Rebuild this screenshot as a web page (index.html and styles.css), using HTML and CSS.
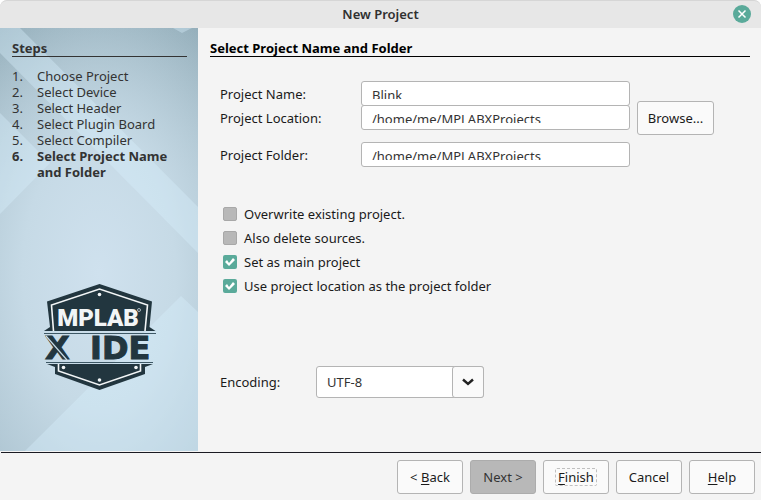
FILE: index.html
```html
<!DOCTYPE html>
<html lang="en">
<head>
<meta charset="utf-8">
<title>New Project</title>
<link rel="stylesheet" href="styles.css">
</head>
<body>
<div class="window">
  <header class="titlebar">
    <h1 class="title">New Project</h1>
    <button class="close" type="button" aria-label="Close">
      <svg viewBox="0 0 18 18" aria-hidden="true"><path d="M5.500 5.500l7 7M12.500 5.500l-7 7"/></svg>
    </button>
  </header>
  <div class="content">
    <aside class="steps">
      <svg class="facets" viewBox="0 0 198 423" preserveAspectRatio="none" aria-hidden="true">
        <path class="light" d="M0 0H20L198 179V225L0 25Z"/>
        <path class="light" d="M0 85L50 135L0 186Z"/>
        <path class="light" d="M173 0H192L182 5Z"/>
        <path class="light" d="M25 423L181 268L198 284V423Z"/>
      </svg>
      <h2 class="heading">Steps</h2>
      <ol class="list">
        <li><span>1.</span><span>Choose Project</span></li>
        <li><span>2.</span><span>Select Device</span></li>
        <li><span>3.</span><span>Select Header</span></li>
        <li><span>4.</span><span>Select Plugin Board</span></li>
        <li><span>5.</span><span>Select Compiler</span></li>
        <li class="current"><span>6.</span><span>Select Project Name and Folder</span></li>
      </ol>
      <svg class="logo" viewBox="0 0 116 108" role="img" aria-label="MPLAB X IDE">
        <path class="ink" d="M57.500 1L110 18.500L107.500 44L113.500 48H2L8 44L5 18.500Z"/>
        <path class="rim" d="M11.500 48L9.500 22L57.500 6L105.500 22L103 48"/>
        <path class="thin" d="M2 50.500H114M4 79.500H111"/>
        <path class="ink" d="M5 81H111L103 84V91L57.500 107L13 91V84Z"/>
        <path class="rim" d="M16.500 81V88L57.500 102L98.500 88V81"/>
        <circle class="dot" cx="57.500" cy="11.500" r="1.800"/>
        <circle class="dot" cx="21.500" cy="84.500" r="1.800"/>
        <circle class="dot" cx="94" cy="84.500" r="1.800"/>
        <circle class="dot" cx="57.500" cy="97" r="1.800"/>
        <text class="brand" x="56" y="43" text-anchor="middle">MPLAB</text>
        <circle class="reg" cx="97" cy="27" r="1.500"/>
        <text class="product" x="3" y="76">X</text>
        <text class="product" x="48" y="76">IDE</text>
        <path class="slash" d="M4 53L25 77"/>
      </svg>
    </aside>
    <main class="panel">
      <h2 class="heading">Select Project Name and Folder</h2>
      <form class="form" id="project">
        <div class="paths">
          <label for="name">Project Name:</label>
          <div class="field"><input id="name" type="text" value="Blink"></div>
          <label for="location">Project Location:</label>
          <div class="field joined"><input id="location" type="text" value="/home/me/MPLABXProjects"></div>
          <button class="button browse" type="button">Browse...</button>
          <label class="apart" for="folder">Project Folder:</label>
          <div class="field apart"><input id="folder" type="text" value="/home/me/MPLABXProjects" readonly></div>
        </div>
        <div class="options">
          <label><input type="checkbox" disabled>Overwrite existing project.</label>
          <label><input type="checkbox" disabled>Also delete sources.</label>
          <label><input type="checkbox" checked>Set as main project</label>
          <label><input type="checkbox" checked>Use project location as the project folder</label>
        </div>
        <div class="encoding">
          <label for="encoding">Encoding:</label>
          <div class="combo">
            <select id="encoding"><option>UTF-8</option></select>
            <span class="arrow"><svg viewBox="0 0 12 8" aria-hidden="true"><path d="M1 1.500L6 6L11 1.500"/></svg></span>
          </div>
        </div>
      </form>
    </main>
  </div>
  <footer class="footer">
    <button class="button" type="button"><span>&lt; <u>B</u>ack</span></button>
    <button class="button" type="button" disabled><span>Next &gt;</span></button>
    <button class="button" type="submit" form="project"><span class="focus"><u>F</u>inish</span></button>
    <button class="button" type="button"><span>Cancel</span></button>
    <button class="button" type="button"><span><u>H</u>elp</span></button>
  </footer>
</div>
</body>
</html>
```
FILE: styles.css
```css
* {
  box-sizing: border-box;
}

body {
  margin: 0;
  background: #fff;
}

body,
button,
input,
select {
  font-family: "Noto Sans", sans-serif;
  font-size: 13px;
  line-height: 16px;
  color: #1a1a1a;
}

.window {
  display: flex;
  flex-direction: column;
  min-height: 100vh;
  background: #f4f4f4;
  border-radius: 7px 7px 0 0;
}

.titlebar {
  display: grid;
  grid-template-columns: 1fr auto 1fr;
  align-items: center;
  height: 28px;
  padding: 0 10px 2px;
  background: #e7e7e7;
  border-top: 1px solid #d6d6d6;
  border-radius: 7px 7px 0 0;
}

.title {
  grid-column: 2;
  margin: 0;
  font-size: 13px;
  font-weight: 600;
  color: #303030;
}

.close {
  justify-self: end;
  width: 18px;
  height: 18px;
  padding: 0;
  border: 0;
  border-radius: 50%;
  background: #5aaa9a;
}

.close svg {
  display: block;
  fill: none;
  stroke: #fff;
  stroke-width: 1.5;
}

.content {
  display: grid;
  grid-template-columns: 198px 1fr;
  flex: 1;
}

.steps {
  position: relative;
  display: flex;
  flex-direction: column;
  padding: 12px 11px 60px 12px;
  background:
    radial-gradient(ellipse 170px 300px at 50% 58%, #cfe1ee 0%, #c6dae6 45%, rgba(190, 212, 223, 0) 100%),
    linear-gradient(#95afbb, #a8bfcb 35%, #a8c0cd);
  color: #333;
}

.facets {
  position: absolute;
  inset: 0;
  width: 100%;
  height: 100%;
}

.light {
  fill: #d8effc;
  fill-opacity: 0.38;
}

.steps > :not(.facets) {
  position: relative;
}

.heading {
  margin: 0;
  border-bottom: 1px solid currentColor;
  font-size: 13px;
  line-height: 16px;
  font-weight: 700;
}

.list {
  margin: 11px 0 0;
  padding: 0;
  list-style: none;
}

.list li {
  display: grid;
  grid-template-columns: 25px 1fr;
}

.current {
  font-weight: 700;
}

.logo {
  width: 116px;
  height: 108px;
  margin: auto 0 0 30px;
}

.ink,
.product {
  fill: #22363f;
}

.rim {
  fill: none;
  stroke: #f2f5f6;
  stroke-width: 1.6;
}

.thin {
  stroke: #3d5865;
  stroke-width: 1.2;
}

.dot,
.brand {
  fill: #f2f5f6;
}

.brand {
  font: 900 24px Roboto, sans-serif;
}

.product {
  font: 700 32px "DejaVu Sans", sans-serif;
  stroke: #22363f;
  stroke-width: 1;
}

.reg {
  fill: none;
  stroke: #a9b7bd;
}

.slash {
  stroke: #c8dce7;
  stroke-width: 1.2;
}

.panel {
  padding: 12px 11px 20px 12px;
}

.panel .heading {
  color: #000;
}

.form {
  padding: 24px 36px 0 10px;
}

.paths {
  display: grid;
  grid-template-columns: 141px 1fr 84px;
  align-items: center;
}

.field {
  grid-column: 2;
  height: 25px;
  padding: 8px 10px;
  border: 1px solid #b4b4b4;
  border-radius: 3px;
  background: #fff;
}

.joined {
  margin-top: -1px;
}

.apart {
  margin-top: 12px;
}

.field input {
  display: block;
  width: 100%;
  height: 9px;
  padding: 0;
  border: 0;
  outline: 0;
  background: none;
  font-size: 13px;
  line-height: 9px;
  color: #333;
}

.button {
  height: 34px;
  padding: 0;
  border: 1px solid #b4b4b4;
  border-radius: 3px;
  background: #fafafa;
}

.button:disabled {
  background: #b8b8b8;
  border-color: #acacac;
  color: #333;
}

.browse {
  grid-area: 1 / 3 / 3 / 4;
  align-self: end;
  margin: 0 0 -5px 7px;
}

.options {
  display: grid;
  gap: 8px;
  margin-top: 39px;
}

.options label {
  display: flex;
  align-items: center;
  gap: 7px;
  padding-left: 3px;
}

.options input {
  appearance: none;
  width: 14px;
  height: 14px;
  margin: 0;
  border-radius: 2px;
  background: #5aaa9a;
}

.options input:disabled {
  background: #b8b8b8;
  border: 1px solid #a8a8a8;
}

.options input:checked::before {
  content: "";
  display: block;
  height: 14px;
  background: #fff;
  clip-path: polygon(2px 7px, 4px 5px, 6px 8px, 10px 3px, 12px 5px, 6px 11px);
}

.encoding {
  display: grid;
  grid-template-columns: 96px 168px;
  align-items: center;
  margin-top: 72px;
}

.combo {
  position: relative;
}

.combo select {
  appearance: none;
  display: block;
  width: 100%;
  height: 32px;
  padding: 0 40px 0 10px;
  border: 1px solid #b4b4b4;
  border-radius: 3px;
  background: #fff;
  font-size: 13px;
  color: #333;
}

.arrow {
  position: absolute;
  inset: 0 0 0 auto;
  display: grid;
  place-items: center;
  width: 32px;
  border: 1px solid #b4b4b4;
  border-radius: 3px;
  background: #fafafa;
  pointer-events: none;
}

.arrow svg {
  width: 12px;
  height: 8px;
  fill: none;
  stroke: #222;
  stroke-width: 2.4;
}

.footer {
  display: flex;
  justify-content: flex-end;
  gap: 7px;
  margin: 1px 0 0 1px;
  padding: 7px 6px 6px;
  border-top: 1px solid #1a1a22;
}

.footer .button {
  width: 66px;
}

.focus {
  padding: 0 3px;
  outline: 1px dashed #c0c0c0;
  outline-offset: -1px;
  border-radius: 2px;
}

u {
  text-underline-offset: 2px;
}
```
